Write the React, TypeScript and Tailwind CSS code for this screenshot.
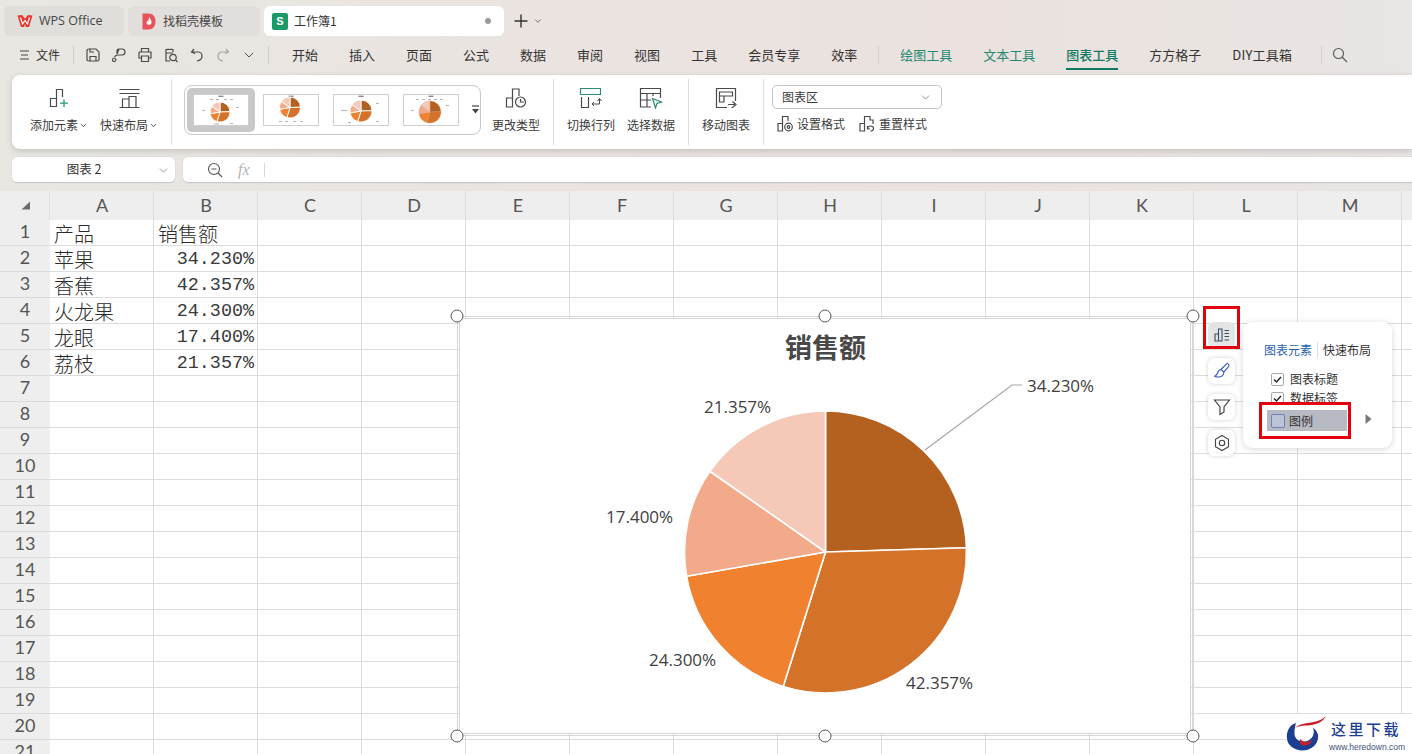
import React from "react";
import { ChevronDown } from "lucide-react";

const cjk = "font-['Noto_Sans_CJK_SC','Noto_Sans',sans-serif]";

const Ico = ({ w = 20, h = 20, vb, children, cls = "" }: { w?: number; h?: number; vb?: string; children: React.ReactNode; cls?: string }) => (
  <svg width={w} height={h} viewBox={vb || `0 0 ${w} ${h}`} fill="none" stroke="#4a4a4a" strokeWidth={1.2} className={cls}>
    {children}
  </svg>
);

const RibbonBtn = ({ icon, label, arrow, w = 60 }: { icon: React.ReactNode; label: string; arrow?: boolean; w?: number }) => (
  <div className="flex flex-col items-center shrink-0" style={{ width: w }}>
    <div className="h-[26px] flex items-center justify-center">{icon}</div>
    <div className="mt-[6px] flex items-center text-[12px] leading-[16px] text-[#3b3b3b] whitespace-nowrap">
      {label}
      {arrow && <ChevronDown size={9} strokeWidth={2.4} className="ml-[1px]" color="#444" />}
    </div>
  </div>
);

const Sep = () => <div className="w-px my-[4px] bg-[#dedede] shrink-0" />;

function arcs(values: number[], cx: number, cy: number, r: number) {
  const total = values.reduce((a, b) => a + b, 0);
  let a = -Math.PI / 2;
  return values.map((v) => {
    const b = a + (v / total) * Math.PI * 2;
    const d = `M${cx} ${cy}L${(cx + r * Math.cos(a)).toFixed(2)} ${(cy + r * Math.sin(a)).toFixed(2)}A${r} ${r} 0 ${b - a > Math.PI ? 1 : 0} 1 ${(cx + r * Math.cos(b)).toFixed(2)} ${(cy + r * Math.sin(b)).toFixed(2)}Z`;
    a = b;
    return d;
  });
}

const values = [34.23, 42.357, 24.3, 17.4, 21.357];
const colors = ["#b46120", "#d57229", "#ef812f", "#f2aa8a", "#f5c8b8"];

const Thumb = ({ cx, cy, r, dots, round }: { cx: number; cy: number; r: number; dots: number[][]; round?: boolean }) => (
  <div className="w-[56px] h-[32px] bg-white border border-[#cfcfcf] shrink-0">
    <svg width="54" height="30" viewBox="0 0 54 30">
      <rect x="24.5" y="0.6" width="5" height="1.4" fill="#8a8a8a" />
      {arcs(values, cx, cy, r).map((d, i) => (
        <path key={i} d={d} fill={colors[i]} stroke={round ? "#d99a6c" : "#fff"} strokeWidth={round ? 0.4 : 0.9} />
      ))}
      {dots.map((p, i) => (
        <rect key={i} x={p[0]} y={p[1]} width={p[2] || 3} height="1" fill="#b4b4b4" />
      ))}
    </svg>
  </div>
);

const menu = ["开始", "插入", "页面", "公式", "数据", "审阅", "视图", "工具", "会员专享", "效率"];
const cols = ["A", "B", "C", "D", "E", "F", "G", "H", "I", "J", "K", "L", "M", ""];
const rows: [string, string][] = [
  ["产品", "销售额"],
  ["苹果", "34.230%"],
  ["香蕉", "42.357%"],
  ["火龙果", "24.300%"],
  ["龙眼", "17.400%"],
  ["荔枝", "21.357%"],
];
const rowNums = Array.from({ length: 21 }, (_, i) => i + 1);

const Handle = ({ cls }: { cls: string }) => (
  <div className={`absolute w-[13px] h-[13px] rounded-full bg-white border border-[#555] -translate-x-1/2 -translate-y-1/2 ${cls}`} />
);

const SideBtn = ({ children, active }: { children: React.ReactNode; active?: boolean }) => (
  <div className={`w-[27px] h-[26px] rounded-[6px] flex items-center justify-center ${active ? "bg-[#e4e4e4]" : "bg-white shadow-[0_0_4px_rgba(0,0,0,0.18)]"}`}>
    {children}
  </div>
);

const Check = () => (
  <div className="w-[13px] h-[13px] bg-white border border-[#a8a8a8] rounded-[2px] flex items-center justify-center">
    <svg width="9" height="9" viewBox="0 0 9 9" fill="none" stroke="#222" strokeWidth="1.4"><path d="M1 4.5L3.5 7L8 2" /></svg>
  </div>
);

export default function App() {
  return (
    <div className={`relative w-[1412px] h-[754px] overflow-hidden bg-white ${cjk}`}>
      {/* top chrome */}
      <div className="h-[191px] bg-[linear-gradient(90deg,#e8e7e2,#ebe3e0_45%,#ebe2df_70%,#e8e5e3)]">
        {/* tabs */}
        <div className="h-[40px] pt-[6px] pl-[4px] flex items-start gap-[4px]">
          <div className="w-[120px] h-[30px] rounded-[6px] bg-[#dfdeda] flex items-center pl-[13px]">
            <svg width="16" height="14" viewBox="0 0 16 14">
              <path d="M0.5 1.5L5 1L8 4.5L11 1L15.5 1.5L12 13L8.8 13L8 9.5L7.2 13L4 13Z" fill="#e8382c" />
              <path d="M3.5 3.5L5.5 10L8 6.5L10.5 10L12.5 3.5" fill="none" stroke="#fff" strokeWidth="1.2" />
            </svg>
            <span className="ml-[6px] text-[12.5px] text-[#444] font-['Open_Sans',sans-serif]">WPS Office</span>
          </div>
          <div className="w-[132px] h-[30px] rounded-[6px] bg-[#e2dedb] flex items-center pl-[14px]">
            <svg width="14" height="17" viewBox="0 0 14 17">
              <path d="M0.5 0.5H6.5C11 0.5 13.5 4 13.5 8.5C13.5 13 11 16.5 6.5 16.5H0.5Z" fill="#e8525a" />
              <path d="M7.5 4C8 6.5 10 7.5 9.5 10C9 12 6.5 12.5 5 11C4 9.5 5 8 5.5 7.5C5.8 8.3 6.3 8.5 6.6 8.5C6.3 7 6.7 5.2 7.5 4Z" fill="#fff" />
            </svg>
            <span className="ml-[7px] text-[12px] text-[#444]">找稻壳模板</span>
          </div>
          <div className="w-[240px] h-[30px] rounded-[6px] bg-white flex items-center pl-[8px]">
            <div className="w-[16px] h-[17px] rounded-[2px] bg-[#1a9a68] flex items-center justify-center text-white text-[11px] font-bold font-['Liberation_Sans',sans-serif]">S</div>
            <span className="ml-[6px] text-[12px] text-[#333]">工作簿1</span>
            <div className="ml-auto mr-[13px] w-[6px] h-[6px] rounded-full bg-[#9a9a9a]" />
          </div>
          <div className="ml-[5px] h-[30px] flex items-center">
            <svg width="16" height="16" viewBox="0 0 16 16" stroke="#333" strokeWidth="1.4"><path d="M8 1.5V14.5M1.5 8H14.5" /></svg>
            <ChevronDown size={10} strokeWidth={1.8} color="#444" className="ml-[4px]" />
          </div>
        </div>

        {/* menu row */}
        <div className="h-[35px] pb-[5px] flex items-center text-[13px] text-[#333]">
          <svg width="9" height="10" viewBox="0 0 9 10" stroke="#444" strokeWidth="1" className="ml-[20px]"><path d="M0 1H9M1 5H8M0 9H9" /></svg>
          <span className="ml-[7px] text-[12px]">文件</span>
          <div className="ml-[13px] w-px h-[18px] bg-[#d0cdc9]" />
          <div className="ml-[11px] flex items-center gap-[10px]">
            <Ico w={16} h={16}><path d="M2 3.5C2 2.5 2.5 2 3.5 2H11L14 5V12.5C14 13.5 13.5 14 12.5 14H3.5C2.5 14 2 13.5 2 12.5ZM5 14V9.5H11V14M5 2V5H9" /></Ico>
            <Ico w={16} h={16}><path d="M8 2H11C13 2 14 3.5 14 5C14 6.5 13 8 11 8H7C5 8 4 9 3.5 10M6 7V3.5C6 2.7 6.8 2 8 2ZM3 11C1.8 11 1.5 12.3 1.5 13C1.5 14 2.5 14.7 3.5 14.5C4.5 14.2 5 13.3 4.8 12.3C4.6 11.5 3.8 11 3 11Z" /></Ico>
            <Ico w={16} h={16}><path d="M4.5 5V1.5H11.5V5M2 5H14V11H11.5M4.5 11H2V5M4.5 9H11.5V14.5H4.5Z" /></Ico>
            <Ico w={16} h={16}><path d="M7 14H3V2.5H10V5M3 6H10M5 2.5V1.5M8 2.5V1.5" /><circle cx="10" cy="10.5" r="3.2" /><path d="M12.5 13L14.5 15" /></Ico>
            <Ico w={16} h={16}><path d="M5 2L2.5 5L6 6.5M3 5H9C11.5 5 13 7 13 9C13 11.5 11 13.5 8 14" /></Ico>
            <Ico w={16} h={16} cls="opacity-40"><path d="M11 2L13.5 5L10 6.5M13 5H7C4.5 5 3 7 3 9C3 11.5 5 13.5 8 14" /></Ico>
            <ChevronDown size={16} strokeWidth={1.4} color="#444" />
          </div>
          <div className="ml-[11px] w-px h-[18px] bg-[#d0cdc9]" />
          <div className="ml-[23px] flex items-center gap-[31px] whitespace-nowrap">
            {menu.map((m) => (
              <span key={m}>{m}</span>
            ))}
          </div>
          <div className="ml-[21px] w-px h-[18px] bg-[#d3cfcc]" />
          <div className="ml-[21px] flex items-center gap-[31px] whitespace-nowrap">
            <span className="text-[#1f8a70]">绘图工具</span>
            <span className="text-[#1f8a70]">文本工具</span>
            <span className="relative text-[#0f7a63] font-medium">
              图表工具
              <span className="absolute left-0 right-0 -bottom-[5px] h-[2px] bg-[#0f7a63]" />
            </span>
            <span>方方格子</span>
            <span className="tracking-[0.2px]">DIY工具箱</span>
          </div>
          <div className="ml-[29px] w-px h-[18px] bg-[#d3cfcc]" />
          <svg width="16" height="16" viewBox="0 0 16 16" fill="none" stroke="#555" strokeWidth="1.1" className="ml-[10px]"><circle cx="6.5" cy="6.5" r="5" /><path d="M10 10L15 15" /></svg>
        </div>

        {/* ribbon */}
        <div className="ml-[12px] h-[74px] bg-white rounded-l-[8px] shadow-[0_2px_6px_rgba(0,0,0,0.16)] flex">
          <div className="w-[159px] shrink-0 flex pl-[12px] pt-[10px]">
            <RibbonBtn
              w={70}
              arrow
              label="添加元素"
              icon={
                <Ico>
                  <path d="M1.5 18.5V10.5H7.5V18.5H1.5ZM7.5 10.5V1.5H13.5V9" />
                  <path d="M15 11.5V19M11 15.2H19" stroke="#1f9a7a" strokeWidth="1.3" />
                </Ico>
              }
            />
            <RibbonBtn
              w={70}
              arrow
              label="快速布局"
              icon={
                <Ico w={21} h={21}>
                  <path d="M0.5 1.5H20.5M0.5 5.5H20.5M0.5 19.5H20.5M3.5 19.5V11H10V19.5M10 19.5V8.5H17V19.5" />
                </Ico>
              }
            />
          </div>
          <Sep />
          <div className="w-[381px] shrink-0 pl-[12px] flex">
            <div className="mt-[10px] w-[297px] h-[50px] rounded-[8px] border border-[#c9c9c9] flex items-center pl-[2px] shrink-0">
              <div className="w-[68px] h-[44px] rounded-[5px] bg-[#c8c8c8] flex items-center justify-center shrink-0">
                <Thumb cx={26} cy={17} r={10} dots={[[16, 4], [22, 4], [30, 4], [36, 4], [42, 12], [8, 15], [20, 28.5, 5], [36, 28]]} />
              </div>
              <div className="ml-[8px] flex gap-[14px]">
                <Thumb cx={26} cy={12.5} r={10.5} dots={[[15, 26], [21, 26], [29, 26], [36, 26]]} />
                <Thumb cx={27} cy={16} r={11} dots={[[42, 8], [7, 15, 6], [14, 27], [42, 26]]} />
                <Thumb cx={26} cy={17} r={11} round dots={[[12, 4], [18, 4], [24, 4], [30, 4], [36, 4], [42, 10], [7, 15]]} />
              </div>
              <svg width="9" height="10" viewBox="0 0 9 10" className="ml-[12px]" fill="#444"><path d="M1 1H8" stroke="#444" strokeWidth="1.2" /><path d="M1 4L8 4L4.5 8.5Z" /></svg>
            </div>
            <div className="ml-[5px] pt-[10px]">
              <RibbonBtn
                label="更改类型"
                icon={
                  <Ico w={22} h={22}>
                    <path d="M1.5 20V11H7.5V20H1.5ZM7.5 11V2H14V9" />
                    <circle cx="15.5" cy="15" r="5" />
                    <path d="M15.5 12V15H19" />
                  </Ico>
                }
              />
            </div>
          </div>
          <Sep />
          <div className="w-[134px] shrink-0 pl-[7px] pt-[10px] flex">
            <RibbonBtn
              label="切换行列"
              icon={
                <Ico w={24} h={22}>
                  <path d="M1.5 1.5H21.5V7.5H1.5Z" stroke="#2f8a78" />
                  <path d="M2.5 10V20.5H9.5V10" />
                  <path d="M13 17H20.5V12M18.5 14L20.5 11.5L22.5 14M15 15L13 17L15 19" strokeWidth="1" />
                </Ico>
              }
            />
            <RibbonBtn
              label="选择数据"
              icon={
                <Ico w={24} h={22}>
                  <path d="M12 20H1.5V1.5H21.5V11M1.5 6.5H21.5M1.5 13H12M8 6.5V20M14 6.5V9" />
                  <path d="M13.5 11.5L22.5 15L18 16.5L16.5 21Z" stroke="#2f8a78" fill="#e8f4f0" />
                </Ico>
              }
            />
          </div>
          <Sep />
          <div className="w-[74px] shrink-0 pl-[7px] pt-[10px] flex">
            <RibbonBtn
              label="移动图表"
              icon={
                <Ico w={22} h={22}>
                  <path d="M12 20.5H1.5V1.5H20.5V14M4.5 5H17.5V9H9V15H4.5ZM9 9H4.5" />
                  <path d="M13 17.5H20M17.5 14.5L21 17.5L17.5 20.5H16.5" />
                </Ico>
              }
            />
          </div>
          <Sep />
          <div className="pl-[8px] pt-[10px]">
            <div className="w-[170px] h-[24px] rounded-[5px] border border-[#c4c4c4] flex items-center px-[9px] text-[12px] text-[#3b3b3b]">
              图表区
              <ChevronDown size={13} strokeWidth={1.2} color="#555" className="ml-auto" />
            </div>
            <div className="mt-[6px] flex items-center text-[12px] leading-[16px] text-[#3b3b3b] pl-[5px]">
              <Ico w={17} h={17}>
                <path d="M1 16V8.5H5.5V16H1ZM5.5 8.5V1.5H11V6" />
                <circle cx="11.5" cy="12" r="3.8" />
                <circle cx="11.5" cy="12" r="1.3" />
              </Ico>
              <span className="ml-[3px]">设置格式</span>
              <Ico w={17} h={17} cls="ml-[14px]">
                <path d="M1 16V8.5H5.5V16H1ZM5.5 8.5V1.5H11V5H14V9" />
                <path d="M8.5 14C8.5 12 10 11 11.5 11C13 11 14.5 12 14.5 13.5C14.5 15 13 16 11.5 16M8.5 11V14H11" />
              </Ico>
              <span className="ml-[3px]">重置样式</span>
            </div>
          </div>
        </div>

        {/* formula row */}
        <div className="mt-[8px] ml-[12px] h-[26px] flex gap-[8px]">
          <div className="relative w-[163px] rounded-[5px] bg-white border-b border-[#c8c8c8] shadow-[0_0_1px_rgba(0,0,0,0.25)] flex items-center justify-center text-[12.5px] text-[#333] pr-[19px]">
            图表 2
            <ChevronDown size={13} strokeWidth={1.2} color="#666" className="absolute right-[5px] top-[7px]" />
          </div>
          <div className="flex-1 rounded-l-[5px] bg-white border-b border-[#c8c8c8] shadow-[0_0_1px_rgba(0,0,0,0.25)] flex items-center pl-[24px]">
            <svg width="16" height="16" viewBox="0 0 16 16" fill="none" stroke="#555" strokeWidth="1.1"><circle cx="7" cy="7" r="5.5" /><path d="M11 11L15 15M4.5 7H9.5" /></svg>
            <span className="ml-[15px] italic text-[16px] text-[#b5b5b5] font-['Liberation_Serif',serif]">fx</span>
            <div className="ml-[14px] w-px h-[14px] bg-[#d8d8d8]" />
          </div>
        </div>
      </div>

      {/* sheet */}
      <div className="text-[#555] font-['Lato',sans-serif]">
        <div className="flex h-[29px] bg-[#eeeeee]">
          <div className="w-[50px] shrink-0 flex items-center justify-center border-r border-[#e0e0e0]">
            <svg width="10" height="9" viewBox="0 0 10 9" className="ml-[2px]"><path d="M9 0.5V8.5H0.5Z" fill="#6a6a6a" /></svg>
          </div>
          {cols.map((c, i) => (
            <div key={i} className="w-[104px] shrink-0 flex items-center justify-center border-r border-[#dddddd] text-[18px] pl-[1px] pb-[1px]">
              {c}
            </div>
          ))}
        </div>
        {rowNums.map((n, r) => (
          <div key={n} className="flex h-[26px]">
            <div className="w-[50px] shrink-0 bg-[#eeeeee] border-b border-[#dcdcdc] flex items-center justify-center text-[18px] leading-none pb-[4px]">
              {n}
            </div>
            {cols.map((c, i) => {
              const val = rows[r] && i < 2 ? rows[r][i] : "";
              const numeric = /^\d/.test(val);
              return (
                <div
                  key={i}
                  className={`w-[104px] shrink-0 border-r border-b border-[#dcdcdc] flex items-center whitespace-nowrap leading-[24px] pt-[2px] ${
                    numeric
                      ? "justify-end pr-[3px] text-[18.4px] text-[#3a3a3a] font-['Liberation_Mono',monospace]"
                      : `pl-[4px] text-[20px] text-[#2b2b2b] font-light ${cjk}`
                  }`}
                >
                  {val}
                </div>
              );
            })}
          </div>
        ))}
      </div>

      {/* chart object */}
      <div className="absolute left-[457px] top-[316px] w-[736px] h-[420px]">
        <div className="w-full h-full border border-[#d6d6d6] p-px">
          <div className="w-full h-full border border-[#d6d6d6] bg-white">
            <svg width="730" height="414" viewBox="460 319 730 414" className={cjk}>
              {arcs(values, 825.5, 552, 141).map((d, i) => (
                <path key={i} d={d} fill={colors[i]} stroke="#fff" strokeWidth="1.6" strokeLinejoin="round" />
              ))}
              <path d="M925 450L1012 385H1022" fill="none" stroke="#a5a5a5" strokeWidth="1.2" />
              <text x="825.5" y="358" textAnchor="middle" fontSize="27" fontWeight="700" fill="#484848">销售额</text>
              <g fontSize="17" fill="#404040" style={{ fontFamily: "'Open Sans','Noto Sans',sans-serif" }}>
                <text x="1027" y="392">34.230%</text>
                <text x="906" y="689">42.357%</text>
                <text x="649" y="666">24.300%</text>
                <text x="606" y="523">17.400%</text>
                <text x="704" y="413">21.357%</text>
              </g>
            </svg>
          </div>
        </div>
        <Handle cls="left-0 top-0" />
        <Handle cls="left-1/2 top-0" />
        <Handle cls="left-full top-0" />
        <Handle cls="left-0 top-full" />
        <Handle cls="left-1/2 top-full" />
        <Handle cls="left-full top-full" />
      </div>

      {/* chart side buttons */}
      <div className="absolute left-[1208px] top-[322px] flex flex-col gap-[10px]">
        <SideBtn active>
          <svg width="16" height="16" viewBox="0 0 16 16" fill="none" stroke="#3a4a66" strokeWidth="1.1"><path d="M1 14V7H4.5V14H1ZM4.5 14V2H8V14H4.5ZM10.5 3.5H15M10.5 6.5H15M10.5 9.5H15M10.5 13H15" /></svg>
        </SideBtn>
        <SideBtn>
          <svg width="18" height="18" viewBox="0 0 18 18" fill="none" stroke="#3558b8" strokeWidth="1.1"><path d="M8 7.5L13.5 1.8C14.5 1 16.6 2.6 16 4L10.8 10.2Z" /><path d="M7.8 7.8C5.5 8 5 9.6 4.6 11C4.2 12.4 3.2 13.4 1.8 14.2C4.6 15.6 8.6 15.2 10 13C10.8 11.8 11 11 10.6 10.2" /></svg>
        </SideBtn>
        <SideBtn>
          <svg width="18" height="18" viewBox="0 0 18 18" fill="none" stroke="#444" strokeWidth="1.2"><path d="M1.5 2H16.5L11 9V14L7 16.5V9Z" /></svg>
        </SideBtn>
        <SideBtn>
          <svg width="18" height="18" viewBox="0 0 18 18" fill="none" stroke="#444" strokeWidth="1.1"><path d="M9 1.5L15.5 5.2V12.8L9 16.5L2.5 12.8V5.2Z" /><circle cx="9" cy="9" r="2.7" /></svg>
        </SideBtn>
      </div>

      {/* chart element panel */}
      <div className="absolute left-[1243px] top-[322px] w-[149px] h-[126px] rounded-[9px] bg-white shadow-[0_1px_6px_rgba(0,0,0,0.16)] text-[12px] text-[#333]">
        <div className="mt-[20px] pl-[21px] flex items-center h-[16px]">
          <span className="text-[#2a62b0]">图表元素</span>
          <div className="mx-[5px] w-px h-[16px] bg-[#dddddd]" />
          <span>快速布局</span>
        </div>
        <div className="mt-[13px] pl-[28px] flex items-center gap-[6px] h-[16px]">
          <Check />
          <span>图表标题</span>
        </div>
        <div className="mt-[3px] pl-[28px] flex items-center gap-[6px] h-[16px]">
          <Check />
          <span>数据标签</span>
        </div>
        <div className="absolute left-[24px] top-[88px] w-[80px] h-[21px] bg-[#b7b9c3] flex items-center pl-[4px] gap-[4px]">
          <div className="w-[14px] h-[14px] rounded-[2px] border border-[#6d82b8] bg-[#bcc3d6]" />
          <span>图例</span>
        </div>
        <svg width="7" height="10" viewBox="0 0 7 10" className="absolute left-[122px] top-[92px]"><path d="M0.5 0L6.5 5L0.5 10Z" fill="#777" /></svg>
      </div>

      {/* red annotation boxes */}
      <div className="absolute left-[1203px] top-[306px] w-[37px] h-[43px] border-[3px] border-[#e2000f]" />
      <div className="absolute left-[1259px] top-[402px] w-[92px] h-[37px] border-[3px] border-[#e2000f]" />

      {/* watermark */}
      <div className="absolute right-0 bottom-0 w-[126px] h-[40px] bg-white">
        <svg width="42" height="38" viewBox="0 0 42 38" className="absolute left-0 top-[1px]">
          <path d="M10 8C3 10 0 17 1 24C2 32 11 37 21 35C28 33 33 27 32 20C31 16 29 14 27 13C29 18 27 24 21 26C15 28 9 25 8.5 19C8.3 15 9 11 10 8Z" fill="#1c3f94" />
          <path d="M14 24C18 28.5 25 27.5 27 23C26 28 21 32 16 30C14 29 13 26 14 24Z" fill="#c81e28" />
          <path d="M9 13C14 8 24 8 28 7C33 6 37 4 40 1C37 7 31 9 26 10C20 11 14 10 9 13Z" fill="#c81e28" />
        </svg>
        <div className="absolute left-[45px] top-[7px] text-[15px] leading-[16px] font-medium text-[#1c3f94] tracking-[2.5px] whitespace-nowrap">这里下载</div>
        <div className="absolute left-[43px] top-[28px] text-[8.5px] leading-[10px] text-[#44527a] font-['Liberation_Sans',sans-serif] whitespace-nowrap">www.heredown.com</div>
      </div>
    </div>
  );
}
